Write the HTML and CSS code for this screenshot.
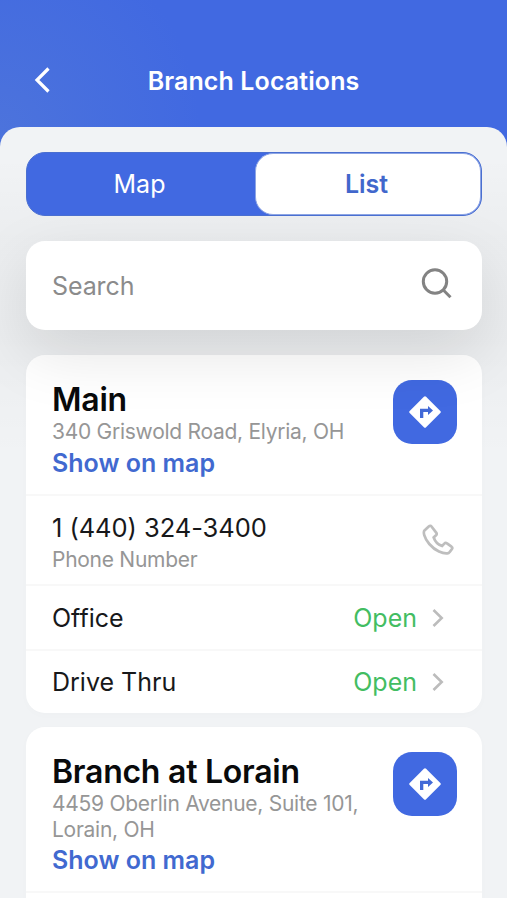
FILE: index.html
```html
<!DOCTYPE html>
<html lang="en">
<head>
<meta charset="utf-8">
<title>Branch Locations</title>
<link rel="stylesheet" href="styles.css">
</head>
<body>
<div class="screen">
  <header class="header">
    <svg class="back" viewBox="0 0 18 28"><path d="M15.500 2.500 4 14l11.500 11.500"/></svg>
    <h1 class="title">Branch Locations</h1>
  </header>
  <main class="sheet">
    <div class="tabs">
      <div class="tab">Map</div>
      <div class="tab tab-active">List</div>
    </div>
    <div class="search">
      <span class="search-text">Search</span>
      <svg class="search-icon" viewBox="0 0 32 32"><circle cx="14" cy="13.500" r="11.700"/><path d="m22.300 22 7.200 7.200"/></svg>
    </div>
    <section class="card">
      <div class="branch">
        <div class="info">
          <h2 class="name">Main</h2>
          <p class="address">340 Griswold Road, Elyria, OH</p>
          <a class="link">Show on map</a>
        </div>
        <div class="directions">
          <svg viewBox="0 0 32 32"><path class="sign" d="M14.900.7a1.600 1.600 0 0 1 2.200 0l14.200 14.200a1.600 1.600 0 0 1 0 2.200L17.100 31.300a1.600 1.600 0 0 1-2.200 0L.7 17.100a1.600 1.600 0 0 1 0-2.200z"/><path class="turn" d="M11 22v-9.300h8V10l5 4.500-5 4.400v-2.900h-4.700v6z"/></svg>
        </div>
      </div>
      <div class="row row-phone">
        <div class="contact">
          <p class="label label-number">1 (440) 324-3400</p>
          <p class="sub">Phone Number</p>
        </div>
        <svg class="phone-icon" viewBox="0 0 32 32"><path d="M7 2.300 2.500 6.400c-1.400 1.500-.6 7.300 4.800 13.600 6 7 13.800 9.800 18.100 9.300 1-.1 1.700-.7 2.400-1.500l2-2.600c.7-.9.600-1.800-.3-2.500L25 19.400c-.9-.7-2-.6-2.700.2l-2.200 2.300c-3.600-1-7.100-4.600-8.400-8.400l2.300-2.200c.8-.8.900-1.700.2-2.600L9.500 2.500C8.800 1.600 7.800 1.500 7 2.300z"/></svg>
      </div>
      <div class="row">
        <span class="label">Office</span>
        <span class="status">Open</span>
        <svg class="chevron" viewBox="0 0 12 20"><path d="m1.500 2 8.200 8-8.200 8"/></svg>
      </div>
      <div class="row">
        <span class="label">Drive Thru</span>
        <span class="status">Open</span>
        <svg class="chevron" viewBox="0 0 12 20"><path d="m1.500 2 8.200 8-8.200 8"/></svg>
      </div>
    </section>
    <section class="card">
      <div class="branch">
        <div class="info">
          <h2 class="name">Branch at Lorain</h2>
          <p class="address">4459 Oberlin Avenue, Suite 101,<br>Lorain, OH</p>
          <a class="link">Show on map</a>
        </div>
        <div class="directions">
          <svg viewBox="0 0 32 32"><path class="sign" d="M14.900.7a1.600 1.600 0 0 1 2.200 0l14.200 14.200a1.600 1.600 0 0 1 0 2.200L17.100 31.300a1.600 1.600 0 0 1-2.200 0L.7 17.100a1.600 1.600 0 0 1 0-2.200z"/><path class="turn" d="M11 22v-9.300h8V10l5 4.500-5 4.400v-2.900h-4.700v6z"/></svg>
        </div>
      </div>
      <div class="row row-phone"></div>
    </section>
  </main>
  <div class="bottom-edge"></div>
</div>
</body>
</html>
```
FILE: styles.css
```css
* { box-sizing: border-box; margin: 0; padding: 0; }
body { font-family: Inter, "Liberation Sans", sans-serif; background: #fff; color: #17181a; }
svg { display: block; fill: none; }
.screen {
  width: 507px; height: 900px; overflow: hidden;
  display: flex; flex-direction: column;
  background: radial-gradient(circle at 0 128px, #4c73dc 0, #4169e1 200px);
}
.header { height: 127px; flex: none; display: grid; grid-template-columns: 60px 1fr 60px; align-items: center; padding-top: 34px; }
.back { width: 18px; height: 28px; margin: 0 0 1px 32.500px; stroke: #fff; stroke-width: 3.200; }
.title { font-size: 25px; font-weight: 600; line-height: 32px; letter-spacing: .1px; text-align: center; color: #fff; white-space: nowrap; }
.sheet {
  flex: 1; min-height: 0; overflow: hidden; border-radius: 20px 20px 0 0; padding: 25px 25px 0 26px;
  background: linear-gradient(rgba(0, 0, 0, 0) 30px, rgba(0, 0, 0, .022) 110px, rgba(0, 0, 0, .022) 215px, rgba(0, 0, 0, 0) 330px) #f1f3f5;
}
.tabs { height: 64px; border: 1px solid #4a6fd0; border-radius: 19px; background: #4169e1; display: grid; grid-template-columns: 228px 1fr; position: relative; z-index: 2; }
.tab { display: flex; align-items: center; justify-content: center; color: #fff; font-size: 25px; line-height: 32px; padding-right: 3px; }
.tab-active { background: #fff; border: 1px solid #8da5e4; border-radius: 18px; color: #4167cc; font-weight: 600; }
.search {
  height: 89px; margin: 25px 0; padding: 0 30px 0 26px; border-radius: 19px; background: #fff;
  display: flex; align-items: center; justify-content: space-between;
  box-shadow: 0 22px 64px rgba(0, 0, 0, .115); position: relative; z-index: 1;
}
.search-text { font-size: 25px; letter-spacing: -.1px; color: #8b8b8b; }
.search-icon { width: 32px; height: 32px; margin: 0 -.5px 3px 0; stroke: #838383; stroke-width: 3; }
.card { background: #fff; border-radius: 19px; margin-bottom: 14px; box-shadow: 0 2px 10px rgba(0, 0, 0, .015); }
.branch { display: flex; justify-content: space-between; padding: 25px 26px 15px; }
.info { white-space: nowrap; }
.name { font-size: 32px; line-height: 40px; height: 39px; letter-spacing: -.25px; font-weight: 600; color: #090a0b; }
.address, .sub { font-size: 21px; line-height: 25.500px; letter-spacing: -.27px; color: #969696; }
.link { display: block; margin-top: 2px; font-size: 25px; line-height: 32px; font-weight: 600; color: #4169d0; }
.directions { width: 64px; height: 64px; border-radius: 19px; background: #4169e1; display: flex; align-items: center; justify-content: center; flex: none; margin-right: -1px; }
.directions svg { width: 32px; height: 32px; margin: 0 1px 1px 0; }
.sign { fill: #fff; }
.turn { fill: #4169d7; }
.row { height: 64.500px; border-top: 2px solid #f8f8f8; padding: 1px 26px 0; display: flex; align-items: center; }
.row-phone { height: 90.500px; padding-top: 0; justify-content: space-between; }
.contact { padding-top: 5px; }
.label { font-size: 25px; line-height: 32px; white-space: nowrap; }
.label-number { font-size: 25.500px; letter-spacing: -.05px; }
.sub { margin-top: 3px; }
.phone-icon { width: 32px; height: 32px; margin-right: 2px; stroke: #bebebe; stroke-width: 2.700; }
.status { margin-left: auto; color: #43bd62; font-size: 25px; line-height: 32px; }
.chevron { width: 12px; height: 20px; margin: 0 12px 0 15px; stroke: #bcbcbc; stroke-width: 2.600; }
.bottom-edge { height: 2px; flex: none; background: #fff; }
```
